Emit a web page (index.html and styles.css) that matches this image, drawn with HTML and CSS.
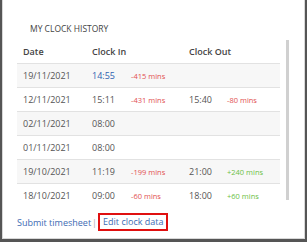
FILE: index.html
```html
<!DOCTYPE html>
<html>
<head>
<meta charset="utf-8">
<link rel="stylesheet" href="styles.css">
</head>
<body>
<div class="frame">
  <div class="card">
    <h2 class="title">MY CLOCK HISTORY</h2>
    <div class="scroll">
      <table class="history">
        <thead>
          <tr><th class="c-date">Date</th><th class="c-in" colspan="2">Clock In</th><th class="c-out" colspan="2">Clock Out</th></tr>
        </thead>
        <tbody>
          <tr><td>19/11/2021</td><td class="blue">14:55</td><td class="neg">-415 mins</td><td></td><td></td></tr>
          <tr><td>12/11/2021</td><td>15:11</td><td class="neg">-431 mins</td><td>15:40</td><td class="neg">-80 mins</td></tr>
          <tr><td>02/11/2021</td><td>08:00</td><td></td><td></td><td></td></tr>
          <tr><td>01/11/2021</td><td>08:00</td><td></td><td></td><td></td></tr>
          <tr><td>19/10/2021</td><td>11:19</td><td class="neg">-199 mins</td><td>21:00</td><td class="pos">+240 mins</td></tr>
          <tr class="last"><td>18/10/2021</td><td>09:00</td><td class="neg">-60 mins</td><td>18:00</td><td class="pos">+60 mins</td></tr>
        </tbody>
      </table>
      <div class="scrollbar"></div>
    </div>
    <div class="footer">
      <a class="link">Submit timesheet</a>
      <span class="sep">|</span>
      <a class="link boxed">Edit clock data</a>
    </div>
  </div>
</div>
</body>
</html>
```

FILE: styles.css
```css
html, body {
  margin: 0;
  padding: 0;
  background: #ffffff;
}
body {
  font-family: "Open Sans", "Liberation Sans", sans-serif;
  color: #555555;
}
.frame {
  width: 307px;
  height: 242px;
  box-sizing: border-box;
  border-left: 2px solid #555555;
  border-right: 2px solid #555555;
  border-bottom: 3px solid #555555;
}
.card {
  height: 100%;
  box-sizing: border-box;
  border-left: 1px solid #d8d8d8;
  border-right: 1px solid #d8d8d8;
  border-bottom: 1px solid #d8d8d8;
  padding: 0 0 0 14px;
  display: flex;
  flex-direction: column;
}
.title {
  margin: 0;
  padding: 23px 0 0 13px;
  height: 17px;
  font-size: 8.5px;
  font-weight: 400;
  color: #444444;
  line-height: 11px;
}
.scroll {
  height: 168px;
  overflow: hidden;
  display: flex;
  gap: 6px;
}
.history {
  width: 263px;
  border-collapse: collapse;
  align-self: flex-start;
}
.history th {
  text-align: left;
  font-weight: 600;
  font-size: 9px;
  color: #444444;
  height: 23px;
  padding: 0 0 0 6px;
  border-bottom: 1px solid #e2e2e2;
  vertical-align: middle;
}
.history td {
  height: 23px;
  padding: 0 0 0 6px;
  font-size: 9px;
  border-bottom: 1px solid #e2e2e2;
  white-space: nowrap;
  vertical-align: middle;
}
.history tr.last td {
  border-bottom: none;
}
.history tbody tr:nth-child(odd) td {
  background: #f7f7f7;
}
.history td:nth-child(1) { width: 63px; }
.history td:nth-child(2) { width: 33px; }
.history td:nth-child(3) { width: 52px; }
.history td:nth-child(4) { width: 32px; }
.history td.blue { color: #2f62b0; }
.history td.neg { color: #e25050; font-size: 7.5px; }
.history td.pos { color: #6cbf45; font-size: 7.5px; }
.scrollbar {
  width: 3px;
  height: 160px;
  background: #d0d0d0;
  flex: none;
}
.footer {
  display: flex;
  align-items: center;
  margin-top: 5px;
  font-size: 9px;
}
.link {
  color: #3d6bb3;
}
.sep {
  color: #aaaaaa;
  margin: 0 0 0 1px;
}
.boxed {
  border: 2px solid #e01010;
  padding: 1px 3px;
  line-height: 12px;
  margin-left: 1px;
}
```
